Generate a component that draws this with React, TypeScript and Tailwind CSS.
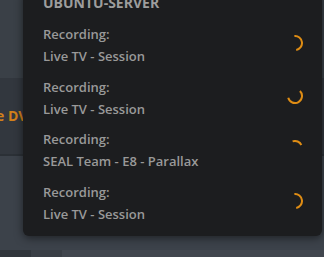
import type { ReactNode } from "react";

const sessions = [
	{ title: "Live TV - Session", arc: [-95, 80] },
	{ title: "Live TV - Session", arc: [-45, 165] },
	{ title: "SEAL Team - E8 - Parallax", arc: [-110, -25] },
	{ title: "Live TV - Session", arc: [-95, 80] },
];

function arcPath(from: number, to: number, r: number, c: number) {
	const rad = (d: number) => (d * Math.PI) / 180;
	const x1 = c + r * Math.cos(rad(from));
	const y1 = c + r * Math.sin(rad(from));
	const x2 = c + r * Math.cos(rad(to));
	const y2 = c + r * Math.sin(rad(to));
	const large = to - from > 180 ? 1 : 0;
	return `M ${x1} ${y1} A ${r} ${r} 0 ${large} 1 ${x2} ${y2}`;
}

function Spinner({ arc }: { arc: number[] }) {
	return (
		<svg width="16" height="16" viewBox="0 0 16 16" className="shrink-0">
			<path d={arcPath(arc[0], arc[1], 7, 8)} fill="none" stroke="#de8c14" strokeWidth="2" strokeLinecap="butt" />
		</svg>
	);
}

function Row({ children, arc }: { children: ReactNode; arc: number[] }) {
	return (
		<div className="flex h-[52.5px] items-start justify-between pl-[20px] pr-[19px]">
			<div className="leading-[22px]">{children}</div>
			<div className="mt-[12px]">
				<Spinner arc={arc} />
			</div>
		</div>
	);
}

export default function App() {
	return (
		<div
			className="relative h-[257px] w-[324px] overflow-hidden bg-[#3c424a]"
			style={{ fontFamily: '"Open Sans", "Liberation Sans", sans-serif' }}
		>
			{/* page behind the popup */}
			<div className="flex h-full flex-col">
				<div className="h-[78px] bg-[#3a4047]" />
				<div className="flex h-[76px] items-center bg-[#32373e]">
					<span className="ml-[-4px] mt-[-1px] whitespace-nowrap text-[14px] font-bold text-[#d2801a]">e DVR</span>
				</div>
				<div className="h-[2px] bg-[#2b3036]" />
				<div className="flex-1 bg-[#3c424a]" />
				<div className="flex h-[7px]">
					<div className="w-[31px] bg-[#30353b]" />
					<div className="w-[31px] bg-[#393e45]" />
					<div className="flex-1 bg-[#41464e]" />
				</div>
			</div>

			{/* activity popup */}
			<div className="absolute left-[23px] right-[2px] top-[-8px] h-[244px] rounded-b-md bg-[#1c1d1f] shadow-[0_2px_8px_rgba(0,0,0,0.5)]">
				<div className="mt-[1px] h-[20px] pl-[20px] text-[14px] font-bold uppercase leading-[20px] text-[#9d9d9d]">ubuntu-server</div>
				<div className="mt-[10px] text-[13px] font-semibold text-[#999999]">
					{sessions.map((s, i) => (
						<Row key={i} arc={s.arc}>
							<div>Recording:</div>
							<div>{s.title}</div>
						</Row>
					))}
				</div>
			</div>
		</div>
	);
}
